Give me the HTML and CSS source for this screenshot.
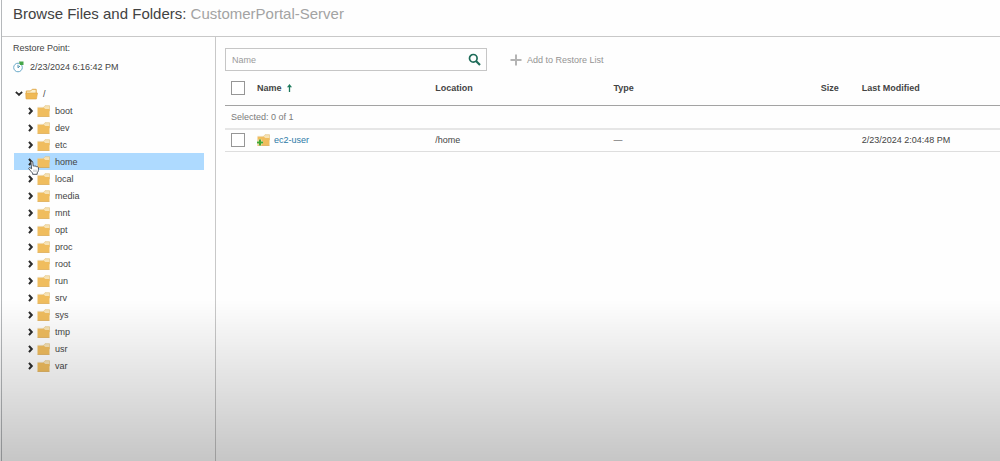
FILE: index.html
```html
<!DOCTYPE html>
<html lang="en">
<head>
<meta charset="utf-8">
<meta name="viewport" content="width=device-width, initial-scale=1">
<title>Browse Files and Folders</title>
<link rel="stylesheet" href="styles.css">
</head>
<body>
<svg width="0" height="0" class="sprite" aria-hidden="true">
  <symbol id="folder" viewBox="0 0 13 12">
    <path d="M5.500 3.500 8 .7h4.500V6h-7z" fill="#f7e3b5" stroke="#e3bf77" stroke-width=".6"/>
    <path d="M.5 2.800h6.300L8.300 4h4.200v7.300H.5z" fill="#f0bd5e"/>
    <path d="M.5 2.400h5.500" stroke="#e9cf98" stroke-width=".7"/>
    <path d="M.5 11h12v.7H.5z" fill="#d9a03c"/>
  </symbol>
  <symbol id="folder-open" viewBox="0 0 13 12">
    <path d="M1.300 10.500V3h4.200l1.700-1.700h4V5" fill="#fbeecb" stroke="#e0a94a"/>
    <path d="M.8 5h11.700l-1.100 6H1.200z" fill="#f0b955" stroke="#dfa444" stroke-width=".6"/>
  </symbol>
  <symbol id="chevron" viewBox="0 0 6 8">
    <path d="M1 .8Q2.300 2.500 3.800 4 2.300 5.500 1 7.200" fill="none" stroke="#2b2b2b" stroke-width="1.900"/>
  </symbol>
</svg>
<div class="app">
  <header class="header">
    <h1 class="title">Browse Files and Folders: <span class="title-target">CustomerPortal-Server</span></h1>
  </header>
  <div class="body">
    <aside class="sidebar">
      <div class="restore-label">Restore Point:</div>
      <div class="restore-point">
        <svg class="clock" viewBox="0 0 11 12" aria-hidden="true">
          <circle cx="5" cy="6.500" r="4.300" fill="#fff" stroke="#69a9c9"/>
          <path d="M5 3.800V6.800L7 5" fill="none" stroke="#4b8eae"/>
          <path d="M6 .5h4.500V4H7z" fill="#45a648"/>
        </svg>
        <span>2/23/2024 6:16:42 PM</span>
      </div>
      <ul class="tree">
        <li>
          <div class="node node-root">
            <button class="toggle toggle-open" aria-label="Collapse /"><svg viewBox="0 0 6 8"><use href="#chevron"/></svg></button>
            <svg class="folder"><use href="#folder-open"/></svg><span>/</span>
          </div>
          <ul class="branch">
            <li class="node"><button class="toggle" aria-label="Expand boot"><svg viewBox="0 0 6 8"><use href="#chevron"/></svg></button><svg class="folder"><use href="#folder"/></svg><span>boot</span></li>
            <li class="node"><button class="toggle" aria-label="Expand dev"><svg viewBox="0 0 6 8"><use href="#chevron"/></svg></button><svg class="folder"><use href="#folder"/></svg><span>dev</span></li>
            <li class="node"><button class="toggle" aria-label="Expand etc"><svg viewBox="0 0 6 8"><use href="#chevron"/></svg></button><svg class="folder"><use href="#folder"/></svg><span>etc</span></li>
            <li class="node node-selected"><button class="toggle" aria-label="Expand home"><svg viewBox="0 0 6 8"><use href="#chevron"/></svg></button><svg class="folder"><use href="#folder"/></svg><span>home</span>
              <svg class="pointer" viewBox="0 0 12 14" aria-hidden="true"><path d="M3 1.400c0-1.100 1.700-1.100 1.800 0l.4 3.800c.5-.7 1.500-.5 1.700.2.500-.5 1.500-.3 1.700.4.700-.4 1.700 0 1.800.9.200 2.300 0 4-1.200 5.100v1.500H4.600v-1.200C3.300 11 2.400 9.500.9 7.900c-.6-.8.400-1.600 1.200-1.100l1.500 1z" fill="#fff" stroke="#3d4650" stroke-width=".9"/><path d="M6 8.500v2.500M8 8.500v2.500" stroke="#8a939c" stroke-width=".6"/></svg>
            </li>
            <li class="node"><button class="toggle" aria-label="Expand local"><svg viewBox="0 0 6 8"><use href="#chevron"/></svg></button><svg class="folder"><use href="#folder"/></svg><span>local</span></li>
            <li class="node"><button class="toggle" aria-label="Expand media"><svg viewBox="0 0 6 8"><use href="#chevron"/></svg></button><svg class="folder"><use href="#folder"/></svg><span>media</span></li>
            <li class="node"><button class="toggle" aria-label="Expand mnt"><svg viewBox="0 0 6 8"><use href="#chevron"/></svg></button><svg class="folder"><use href="#folder"/></svg><span>mnt</span></li>
            <li class="node"><button class="toggle" aria-label="Expand opt"><svg viewBox="0 0 6 8"><use href="#chevron"/></svg></button><svg class="folder"><use href="#folder"/></svg><span>opt</span></li>
            <li class="node"><button class="toggle" aria-label="Expand proc"><svg viewBox="0 0 6 8"><use href="#chevron"/></svg></button><svg class="folder"><use href="#folder"/></svg><span>proc</span></li>
            <li class="node"><button class="toggle" aria-label="Expand root"><svg viewBox="0 0 6 8"><use href="#chevron"/></svg></button><svg class="folder"><use href="#folder"/></svg><span>root</span></li>
            <li class="node"><button class="toggle" aria-label="Expand run"><svg viewBox="0 0 6 8"><use href="#chevron"/></svg></button><svg class="folder"><use href="#folder"/></svg><span>run</span></li>
            <li class="node"><button class="toggle" aria-label="Expand srv"><svg viewBox="0 0 6 8"><use href="#chevron"/></svg></button><svg class="folder"><use href="#folder"/></svg><span>srv</span></li>
            <li class="node"><button class="toggle" aria-label="Expand sys"><svg viewBox="0 0 6 8"><use href="#chevron"/></svg></button><svg class="folder"><use href="#folder"/></svg><span>sys</span></li>
            <li class="node"><button class="toggle" aria-label="Expand tmp"><svg viewBox="0 0 6 8"><use href="#chevron"/></svg></button><svg class="folder"><use href="#folder"/></svg><span>tmp</span></li>
            <li class="node"><button class="toggle" aria-label="Expand usr"><svg viewBox="0 0 6 8"><use href="#chevron"/></svg></button><svg class="folder"><use href="#folder"/></svg><span>usr</span></li>
            <li class="node"><button class="toggle" aria-label="Expand var"><svg viewBox="0 0 6 8"><use href="#chevron"/></svg></button><svg class="folder"><use href="#folder"/></svg><span>var</span></li>
          </ul>
        </li>
      </ul>
    </aside>
    <main class="content">
      <div class="toolbar">
        <div class="search">
          <input class="search-input" type="text" placeholder="Name" aria-label="Name">
          <button class="search-button" aria-label="Search">
            <svg viewBox="0 0 13 13"><circle cx="5.300" cy="5.300" r="3.800" fill="none" stroke="#1d6b58" stroke-width="1.700"/><path d="M8 8l4 4" stroke="#1d6b58" stroke-width="2.200"/></svg>
          </button>
        </div>
        <button class="add-button"><svg viewBox="0 0 12 12"><path d="M6 .5v11M.5 6h11" stroke="#b4b4b4" stroke-width="2"/></svg>Add to Restore List</button>
      </div>
      <table class="files">
        <colgroup><col class="col-check"><col class="col-name"><col class="col-location"><col class="col-type"><col class="col-size"><col class="col-modified"></colgroup>
        <thead>
          <tr>
            <th><input class="check" type="checkbox" aria-label="Select all"></th>
            <th><span class="sorted">Name <svg viewBox="0 0 5 8"><path d="M2.500 8V2" stroke="#1d7a5c" stroke-width="1.300"/><path d="M0 3.200 2.500 0 5 3.200z" fill="#1d7a5c"/></svg></span></th>
            <th>Location</th>
            <th>Type</th>
            <th class="size">Size</th>
            <th>Last Modified</th>
          </tr>
        </thead>
        <tbody>
          <tr class="summary"><td colspan="6">Selected: 0 of 1</td></tr>
          <tr>
            <td><input class="check" type="checkbox" aria-label="Select ec2-user"></td>
            <td><a class="file" href="#ec2-user"><svg viewBox="0 0 13 12"><use href="#folder"/><path d="M3 5.500v6M0 8.500h6" stroke="#fff" stroke-opacity=".7" stroke-width="3"/><path d="M3 5.500v6M0 8.500h6" stroke="#43a832" stroke-width="2"/></svg>ec2-user</a></td>
            <td>/home</td>
            <td>—</td>
            <td class="size"></td>
            <td>2/23/2024 2:04:48 PM</td>
          </tr>
        </tbody>
      </table>
    </main>
  </div>
</div>
</body>
</html>
```
FILE: styles.css
```css
* { box-sizing: border-box; }

body {
  margin: 0;
  background: #fefefe;
  color: #444;
  font: 9px/12px "Liberation Sans", Arial, sans-serif;
}

button { padding: 0; border: 0; background: none; font: inherit; color: inherit; }
ul { margin: 0; padding: 0; list-style: none; }
.sprite { position: absolute; }

.app {
  display: flex;
  flex-direction: column;
  min-height: 100vh;
  margin-left: 1px;
  border-left: 1px solid #b5b8bb;
}

/* Shade that darkens the lower part of the window */
.app::after {
  content: "";
  position: fixed;
  inset: 65% 0 0 0;
  background: linear-gradient(rgba(0, 0, 0, 0), rgba(0, 0, 0, .22));
  pointer-events: none;
}

.header { padding: 4px 11px 12px; border-bottom: 1px solid #c8c8c8; }
.title { margin: 0; font-size: 15px; line-height: 20px; font-weight: 400; color: #424242; }
.title-target { color: #a3a3a3; }

.body { display: flex; flex: 1; }

.sidebar { width: 214px; flex: none; padding: 5px 11px 0; border-right: 1px solid #c8c8c8; }
.restore-point { display: flex; align-items: center; gap: 6px; margin: 7px 0 12px; }
.clock { width: 11px; height: 12px; }

.node { display: flex; align-items: center; height: 17px; padding-left: 14px; margin-left: 1px; }
.node-root { padding-left: 2px; }
.node-selected { position: relative; background: #aedaff; }
.toggle { display: flex; width: 6px; height: 8px; margin-right: 3px; }
.toggle svg { width: 6px; height: 8px; }
.toggle-open svg { transform: rotate(90deg); }
.folder { width: 13px; height: 12px; margin-right: 5px; }
.pointer { position: absolute; left: 14px; top: 8px; width: 12px; height: 14px; z-index: 1; }

.content { flex: 1; min-width: 0; padding: 11px 0 0 9px; }
.toolbar { display: flex; align-items: center; gap: 23px; }

.search {
  display: flex;
  align-items: center;
  width: 262px;
  height: 23px;
  padding: 0 5px 0 6px;
  border: 1px solid #c6c6c6;
}
.search-input { flex: 1; min-width: 0; padding: 0; border: 0; outline: 0; background: none; font: inherit; color: #4c4c4c; }
.search-input::placeholder { color: #9a9a9a; opacity: 1; }
.search-button, .search-button svg { width: 13px; height: 13px; display: block; }
.add-button { display: flex; align-items: center; gap: 5px; color: #949494; }
.add-button svg { width: 12px; height: 12px; }

.files { width: 100%; border-collapse: collapse; table-layout: fixed; }
.col-check { width: 32px; }
.col-name { width: 23%; }
.col-location { width: 23%; }
.col-type { width: 23%; }
.col-size { width: 70px; }
.files th, .files td { padding: 0; text-align: left; white-space: nowrap; }
.files th { height: 34px; border-bottom: 1px solid #a3a3a3; }
.files td { height: 22px; border-bottom: 1px solid #dedede; }
.files .summary td { height: 24px; padding-left: 6px; color: #7b7b7b; border-bottom: 2px solid #e6e6e6; }
.files .size { text-align: right; padding-right: 23px; }

.check {
  appearance: none;
  display: block;
  width: 14px;
  height: 14px;
  margin: 0 0 0 6px;
  border: 1px solid #969696;
  background: #fff;
}
.sorted { display: flex; align-items: center; gap: 5px; }
.sorted svg { width: 5px; height: 8px; }
.file { display: flex; align-items: center; gap: 4px; color: #2c79a6; text-decoration: none; }
.file svg { width: 13px; height: 12px; }
```
